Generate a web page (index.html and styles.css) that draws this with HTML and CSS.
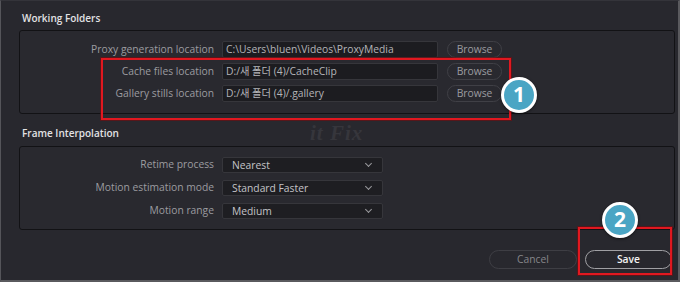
FILE: index.html
```html
<!DOCTYPE html>
<html lang="en">
<head>
  <meta charset="UTF-8">
  <title>Project Settings</title>
  <link rel="stylesheet" href="styles.css">
</head>
<body>
  <div class="window">
    <!-- Working folders -->
    <div class="section-title">Working Folders</div>
    <div class="panel folders">
      <div class="label">Proxy generation location</div>
      <div class="field">C:\Users\bluen\Videos\ProxyMedia</div>
      <button class="pill">Browse</button>

      <div class="label">Cache files location</div>
      <div class="field">D:/새 폴더 (4)/CacheClip</div>
      <button class="pill">Browse</button>

      <div class="label">Gallery stills location</div>
      <div class="field">D:/새 폴더 (4)/.gallery</div>
      <button class="pill">Browse</button>
    </div>

    <!-- Frame interpolation -->
    <div class="section-title second">Frame Interpolation <span class="watermark">it Fix</span></div>
    <div class="panel interp">
      <div class="label">Retime process</div>
      <div class="select">Nearest<span class="chev"></span></div>

      <div class="label">Motion estimation mode</div>
      <div class="select">Standard Faster<span class="chev"></span></div>

      <div class="label">Motion range</div>
      <div class="select">Medium<span class="chev"></span></div>
    </div>

    <div class="actions">
      <button class="pill wide">Cancel</button>
      <button class="pill wide save">Save</button>
    </div>

    <!-- annotations -->
    <div class="mark mark-1"></div>
    <div class="badge badge-1">1</div>
    <div class="mark mark-2"></div>
    <div class="badge badge-2">2</div>
  </div>
</body>
</html>
```

FILE: styles.css
```css
/* General Styling */
body {
  margin: 0;
  padding: 0;
  background-color: #28282e;
  font-family: "Open Sans", "Noto Sans CJK KR", sans-serif;
}

.window {
  position: relative;
  box-sizing: border-box;
  width: 680px;
  height: 282px;
  padding: 9px 3px 0 18px;
  background-color: #28282e;
  border-top: 1px solid #34343a;
  border-left: 1px solid #55555a;
  border-right: 2px solid #5a5a5e;
  border-bottom: 2px solid #5a5a5e;
  overflow: hidden;
}

.section-title {
  position: relative;
  height: 20px;
  padding-left: 3px;
  color: #e2e2e4;
  font-size: 10px;
  font-weight: 600;
  line-height: 16px;
}

.section-title.second {
  margin-top: 11px;
  height: 21px;
}

.watermark {
  position: absolute;
  left: 291px;
  top: 0;
  color: #36363c;
  font-family: "Liberation Serif", serif;
  font-style: italic;
  font-weight: bold;
  font-size: 21px;
  letter-spacing: 1px;
}

.panel {
  display: grid;
  align-items: center;
  row-gap: 5px;
  border: 1px solid #121215;
  border-radius: 3px;
  background-color: #29292f;
}

.folders {
  grid-template-columns: 194px 216px 56px;
  column-gap: 8px;
  padding: 10px 0 11px;
}

.folders .pill {
  margin-left: 1px;
}

.interp {
  grid-template-columns: 194px 161px;
  column-gap: 8px;
  padding: 9px 0 10px;
  row-gap: 6px;
}

.label {
  text-align: right;
  color: #9c9ca0;
  font-size: 10.3px;
  line-height: 17px;
  white-space: nowrap;
}

.field {
  box-sizing: border-box;
  height: 17px;
  padding-left: 3px;
  background-color: #1c1c20;
  border: 1px solid #36363b;
  border-radius: 2px;
  color: #b4b4b8;
  font-size: 10.3px;
  line-height: 15px;
  white-space: nowrap;
  overflow: hidden;
}

.select {
  position: relative;
  box-sizing: border-box;
  height: 16px;
  padding-left: 9px;
  background-color: #1e1e22;
  border: 1px solid #36363b;
  border-radius: 2px;
  color: #c4c4c8;
  font-size: 10.3px;
  line-height: 14px;
}

.chev {
  position: absolute;
  right: 11px;
  top: 3px;
  width: 4px;
  height: 4px;
  border-right: 1px solid #9a9a9e;
  border-bottom: 1px solid #9a9a9e;
  transform: rotate(45deg);
}

.pill {
  box-sizing: border-box;
  height: 17px;
  padding: 0;
  background: transparent;
  border: 1px solid #404046;
  border-radius: 9px;
  color: #9c9ca0;
  font-family: inherit;
  font-size: 10.3px;
  line-height: 15px;
}

.actions {
  display: flex;
  justify-content: flex-end;
  gap: 8px;
  margin-top: 20px;
  padding-right: 3px;
}

.pill.wide {
  width: 88px;
  height: 19px;
  border-radius: 10px;
  border-color: #3e3e44;
  color: #86868a;
}

.pill.save {
  width: 87px;
  border-color: #a0a0a4;
  color: #f2f2f2;
  font-weight: 600;
}

/* Red callout frames */
.mark {
  position: absolute;
  border: 2px solid #e01820;
  box-shadow: 0 0 0 1px rgba(120, 10, 14, 0.6);
}

.mark-1 {
  left: 100px;
  top: 57px;
  width: 406px;
  height: 58px;
}

.mark-2 {
  left: 577px;
  top: 226px;
  width: 90px;
  height: 44px;
}

/* Numbered badges */
.badge {
  position: absolute;
  box-sizing: border-box;
  width: 36px;
  height: 36px;
  border: 3px solid #ffffff;
  border-radius: 50%;
  background-color: #4aa5c4;
  color: #ffffff;
  font-family: "Open Sans", sans-serif;
  font-size: 21px;
  font-weight: bold;
  line-height: 29px;
  text-align: center;
  box-shadow: 0 1px 3px rgba(0, 0, 0, 0.5);
}

.badge-1 {
  left: 500px;
  top: 76px;
}

.badge-2 {
  left: 601px;
  top: 201px;
}
```
